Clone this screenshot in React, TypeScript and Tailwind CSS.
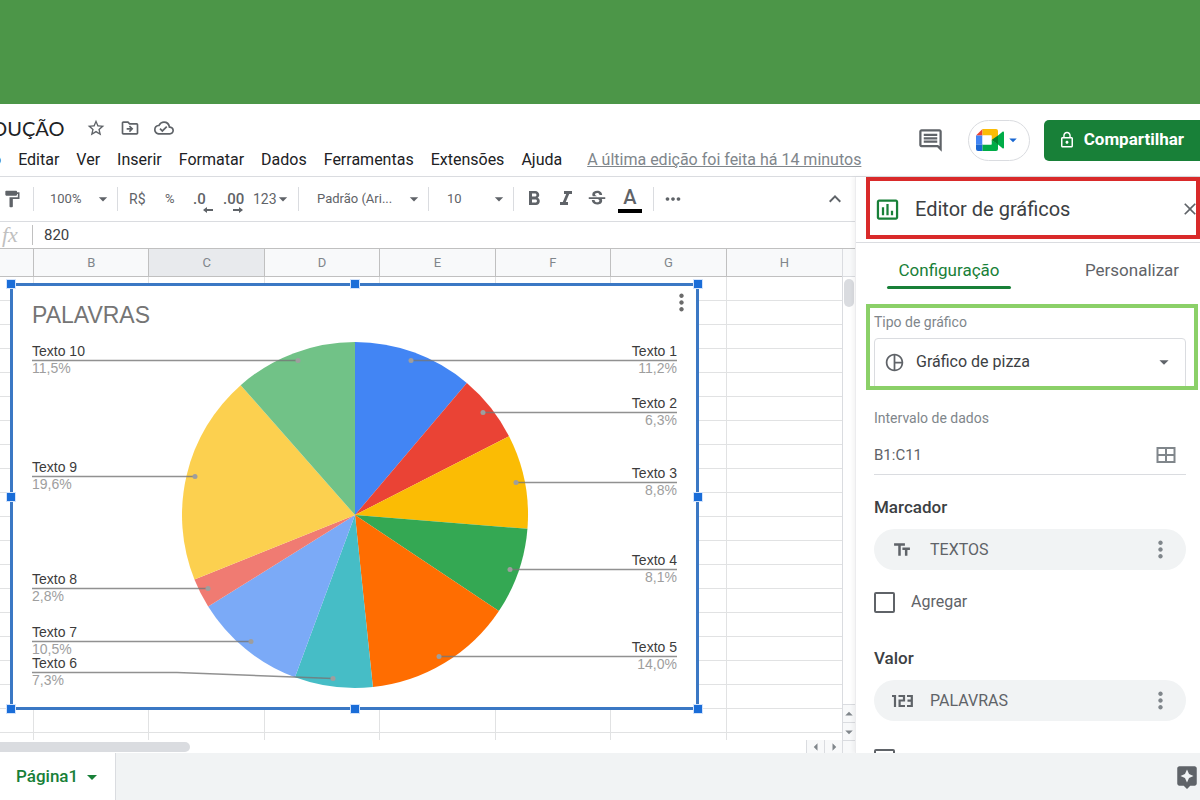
import React from 'react';
import type { ReactNode } from 'react';
import {
  MdArrowDropDown,
  MdAssistant,
  MdClose,
  MdExpandLess,
  MdFormatBold,
  MdFormatItalic,
  MdFormatPaint,
  MdInsertChartOutlined,
  MdLockOutline,
  MdMoreHoriz,
  MdMoreVert,
  MdOutlineCloudDone,
  MdOutlineComment,
  MdOutlineDriveFileMove,
  MdPieChartOutline,
  MdStarBorder,
  MdStrikethroughS,
  MdTextFields,
} from 'react-icons/md';

interface Slice {
  label: string;
  value: number;
  text: string;
  color: string;
  side: 'left' | 'right';
  lineY: number;
  dot: [number, number];
}

// Clockwise from twelve o'clock
const slices: Slice[] = [
  { label: 'Texto 1', value: 11.2, text: '11,2%', color: '#4285f4', side: 'right', lineY: 77, dot: [401, 77] },
  { label: 'Texto 2', value: 6.3, text: '6,3%', color: '#ea4335', side: 'right', lineY: 129, dot: [473, 129] },
  { label: 'Texto 3', value: 8.8, text: '8,8%', color: '#fbbc04', side: 'right', lineY: 199, dot: [506, 199] },
  { label: 'Texto 4', value: 8.1, text: '8,1%', color: '#34a853', side: 'right', lineY: 286, dot: [500, 286] },
  { label: 'Texto 5', value: 14.0, text: '14,0%', color: '#ff6d01', side: 'right', lineY: 373, dot: [429, 373] },
  { label: 'Texto 6', value: 7.3, text: '7,3%', color: '#46bdc6', side: 'left', lineY: 389, dot: [323, 395] },
  { label: 'Texto 7', value: 10.5, text: '10,5%', color: '#7baaf7', side: 'left', lineY: 358, dot: [241, 358] },
  { label: 'Texto 8', value: 2.8, text: '2,8%', color: '#f07b72', side: 'left', lineY: 305, dot: [198, 305] },
  { label: 'Texto 9', value: 19.6, text: '19,6%', color: '#fcd04f', side: 'left', lineY: 193, dot: [185, 193] },
  { label: 'Texto 10', value: 11.5, text: '11,5%', color: '#71c287', side: 'left', lineY: 77, dot: [288, 77] },
];

const CX = 345;
const CY = 232;
const R = 173;
const total = slices.reduce((sum, s) => sum + s.value, 0);

const point = (fraction: number) => {
  const angle = fraction * 2 * Math.PI;
  return `${CX + R * Math.sin(angle)} ${CY - R * Math.cos(angle)}`;
};

const slicePath = (index: number) => {
  const start = slices.slice(0, index).reduce((sum, s) => sum + s.value, 0) / total;
  const end = start + slices[index].value / total;
  return `M${CX} ${CY}L${point(start)}A${R} ${R} 0 0 1 ${point(end)}Z`;
};

const PieChart = () => (
  <svg viewBox="0 0 689 427" className="block h-full w-full font-['Liberation_Sans',sans-serif]">
    <text x="22" y="40" fontSize="23" fill="#757575">PALAVRAS</text>
    {slices.map((s, i) => (
      <path key={s.label} d={slicePath(i)} fill={s.color} />
    ))}
    {slices.map((s) => {
      const left = s.side === 'left';
      const edge = left ? 22 : 667;
      const anchor = left ? 'start' : 'end';
      const bend = left ? 167 : 530;
      return (
        <g key={s.label}>
          <polyline
            points={`${edge},${s.lineY + 0.5} ${s.dot[1] === s.lineY ? edge : bend},${s.lineY + 0.5} ${s.dot[0]},${s.dot[1] + 0.5}`}
            fill="none"
            stroke="#757575"
            strokeOpacity="0.8"
            strokeWidth="1.5"
          />
          <circle cx={s.dot[0]} cy={s.dot[1] + 0.5} r="2.5" fill="#9e9e9e" />
          <text x={edge} y={s.lineY - 4} fontSize="14" textAnchor={anchor} fill="#3c3c3c">{s.label}</text>
          <text x={edge} y={s.lineY + 13} fontSize="14" textAnchor={anchor} fill="#9e9e9e">{s.text}</text>
        </g>
      );
    })}
  </svg>
);

const handles = [
  '-left-1.5 -top-1.5',
  'left-1/2 -top-1.5 -translate-x-1/2',
  '-right-1.5 -top-1.5',
  '-left-1.5 top-1/2 -translate-y-1/2',
  '-right-1.5 top-1/2 -translate-y-1/2',
  '-left-1.5 -bottom-1.5',
  'left-1/2 -bottom-1.5 -translate-x-1/2',
  '-right-1.5 -bottom-1.5',
];

const MeetLogo = () => (
  <svg viewBox="0 0 28 22" className="h-[22px] w-[28px]">
    <path d="M0 6.500 6.500 0v6.500z" fill="#ea4335" />
    <path d="M0 6.500h6.500v9H0z" fill="#4285f4" />
    <path d="M0 15.500h6.500V22H2a2 2 0 0 1-2-2z" fill="#1967d2" />
    <path d="M6.500 0H20a2 2 0 0 1 2 2v6l-6.500 4V6.500h-9z" fill="#fbbc04" />
    <path d="M6.500 15.500h9V11l6.500 4v5a2 2 0 0 1-2 2H6.500z" fill="#00ac47" />
    <path d="M22 6.500v9L15.500 11z" fill="#00832d" />
    <path d="M22 6.500 26.800 2.600c.5-.4 1.200 0 1.200.6v15.600c0 .6-.7 1-1.200.6L22 15.500z" fill="#00ac47" />
    <path d="M6.500 6.500h9v9h-9z" fill="#fff" />
  </svg>
);

const NumberIcon = () => (
  <svg viewBox="0 0 21 13" className="h-[13px] w-[21px]" fill="none" stroke="currentColor" strokeWidth="2.2">
    <path d="M0 2h3v11M6.500 2H12v4.500H7.600V12H13M15 2h4.800v10H15M15.500 6.700h4" />
  </svg>
);

const menus = ['o', 'Editar', 'Ver', 'Inserir', 'Formatar', 'Dados', 'Ferramentas', 'Extensões', 'Ajuda'];

const Header = () => (
  <header className="flex h-[73px] shrink-0 items-center justify-between border-b border-[#dadce0] bg-white">
    <div className="flex flex-col gap-1 pt-2">
      <div className="-ml-2 flex h-7 items-center gap-3.5 text-[#5f6368]">
        <h1 className="mr-2 font-['Lato',sans-serif] text-[20px] leading-7 text-[#202124]">DUÇÃO</h1>
        <button aria-label="Marcar com estrela"><MdStarBorder size={20} /></button>
        <button aria-label="Mover"><MdOutlineDriveFileMove size={20} /></button>
        <button aria-label="Status do documento"><MdOutlineCloudDone size={20} /></button>
      </div>
      <nav className="-ml-2 flex h-7 items-center gap-[17px] whitespace-nowrap text-[16px] text-[#202124]">
        {menus.map((m) => (
          <button key={m}>{m}</button>
        ))}
        <a href="#historico" className="ml-2 text-[#80868b] underline">
          A última edição foi feita há 14 minutos
        </a>
      </nav>
    </div>
    <div className="flex items-center">
      <button aria-label="Comentários" className="mr-6 text-[#5f6368]"><MdOutlineComment size={27} /></button>
      <button aria-label="Meet" className="mr-3.5 flex h-[41px] w-[62px] items-center justify-center rounded-full border border-[#dadce0]">
        <MeetLogo />
        <MdArrowDropDown size={18} className="text-[#1967d2]" />
      </button>
      <button className="flex h-[41px] items-center gap-2 rounded-l-[5px] bg-[#188038] pl-3.5 pr-4 text-[17px] font-bold text-white">
        <MdLockOutline size={18} />
        Compartilhar
      </button>
    </div>
  </header>
);

interface PickerProps {
  label: string;
  value: string;
  className: string;
}

const Picker = ({ label, value, className }: PickerProps) => (
  <div className={`relative flex h-6 items-center border-l border-[#dadce0] ${className}`}>
    <select aria-label={label} className="w-full appearance-none bg-transparent outline-none">
      <option>{value}</option>
    </select>
    <MdArrowDropDown size={20} className="pointer-events-none absolute right-1" />
  </div>
);

const DecimalButton = ({ label, children, flip }: { label: string; children: ReactNode; flip?: boolean }) => (
  <button aria-label={label} className="flex w-[30px] flex-col items-start pt-1.5 text-[15px] font-medium leading-4">
    <span>{children}</span>
    <svg viewBox="0 0 10 6" className={`ml-2.5 h-1.5 w-2.5 ${flip ? 'rotate-180' : ''}`}>
      <path d="M4 0v2h6v2H4v2L0 3z" fill="currentColor" />
    </svg>
  </button>
);

const Toolbar = () => (
  <div className="flex h-[45px] shrink-0 items-center whitespace-nowrap border-b border-[#dadce0] text-[13px] text-[#5f6368]">
    <button aria-label="Pintar formatação" className="w-[33px] shrink-0 pl-0.5"><MdFormatPaint size={20} /></button>
    <Picker label="Zoom" value="100%" className="w-[84px] pl-4" />
    <div className="flex h-6 w-[181px] items-center border-l border-[#dadce0] pl-[11px]">
      <button className="w-9 text-left text-[14px]">R$</button>
      <button className="w-7 text-left">%</button>
      <DecimalButton label="Diminuir casas decimais">.0</DecimalButton>
      <DecimalButton label="Aumentar casas decimais" flip>.00</DecimalButton>
      <button className="flex items-center text-[14px]">
        123
        <MdArrowDropDown size={20} className="-ml-1" />
      </button>
    </div>
    <Picker label="Fonte" value="Padrão (Ari..." className="w-[130px] pl-[18px]" />
    <Picker label="Tamanho da fonte" value="10" className="w-[85px] pl-[18px]" />
    <div className="flex h-6 w-[140px] items-center border-l border-[#dadce0] pl-2">
      <button aria-label="Negrito" className="w-8"><MdFormatBold size={24} /></button>
      <button aria-label="Itálico" className="w-8"><MdFormatItalic size={24} /></button>
      <button aria-label="Tachado" className="w-8"><MdStrikethroughS size={22} /></button>
      <button aria-label="Cor do texto" className="w-6 border-b-4 border-black text-[20px] font-medium leading-6">A</button>
    </div>
    <div className="flex h-6 flex-1 items-center justify-between border-l border-[#dadce0] pl-2 pr-2">
      <button aria-label="Mais"><MdMoreHoriz size={22} /></button>
      <button aria-label="Ocultar menus"><MdExpandLess size={24} /></button>
    </div>
  </div>
);

const columns = ['B', 'C', 'D', 'E', 'F', 'G', 'H'];
const rows = Array.from({ length: 60 }, (_, i) => i + 1);

const Spreadsheet = () => (
  <div className="flex min-h-0 flex-1">
    <div className="flex min-w-0 flex-1 flex-col">
      <div className="relative min-h-0 flex-1 overflow-hidden">
        <table className="w-full table-fixed border-separate border-spacing-0 text-[13px] text-[#80868b]">
          <thead>
            <tr className="h-7 bg-[#f8f9fa]">
              <th className="w-[34px] border-b border-r border-[#c0c0c0] p-0" />
              {columns.map((c) => (
                <th
                  key={c}
                  className={`border-b border-[#c0c0c0] p-0 font-normal ${c === 'H' ? '' : 'border-r'} ${c === 'C' ? 'bg-[#e8eaed]' : ''}`}
                >
                  {c}
                </th>
              ))}
            </tr>
          </thead>
          <tbody>
            {rows.map((r) => (
              <tr key={r} className="h-6">
                <td className="border-b border-r border-[#e1e2e3] p-0" />
                {columns.map((c) => (
                  <td key={c} className={`border-b border-[#e1e2e3] p-0 ${c === 'H' ? '' : 'border-r'}`} />
                ))}
              </tr>
            ))}
          </tbody>
        </table>
        {/* Floating chart, selected */}
        <div className="absolute left-[10px] top-[34px] h-[427px] w-[689px] bg-white">
          <PieChart />
          <div className="absolute inset-0 border-[3px] border-[#3b78c4]">
            {handles.map((h) => (
              <span key={h} className={`absolute size-2 bg-[#1a6dd8] outline outline-[#d2e3fc] ${h}`} />
            ))}
          </div>
          <button aria-label="Opções do gráfico" className="absolute right-1 top-1.5 text-[#6b6b6b]">
            <MdMoreVert size={27} />
          </button>
        </div>
      </div>
      <div className="flex h-[13px] shrink-0 items-center justify-between bg-white">
        <div className="h-2.5 w-[190px] rounded-r-full bg-[#dadce0]" />
        <div className="flex h-full text-[#80868b]">
          <button aria-label="Rolar para a esquerda" className="flex w-[18px] items-center justify-center border-l border-[#dadce0] bg-[#f8f9fa]">
            <MdArrowDropDown size={18} className="shrink-0 rotate-90" />
          </button>
          <button aria-label="Rolar para a direita" className="flex w-[18px] items-center justify-center border-l border-[#dadce0] bg-[#f8f9fa]">
            <MdArrowDropDown size={18} className="shrink-0 -rotate-90" />
          </button>
        </div>
      </div>
    </div>
    <div className="flex w-[13px] shrink-0 flex-col items-center justify-between border-l border-[#dadce0] bg-white text-[#80868b]">
      <div className="flex w-full flex-col items-center gap-0.5">
        <div className="h-7 w-full border-b border-[#dadce0] bg-[#f8f9fa]" />
        <div className="h-7 w-2.5 rounded-full bg-[#dadce0]" />
      </div>
      <div className="w-full bg-[#f8f9fa]">
        <button aria-label="Rolar para cima" className="flex h-[18px] w-full items-center justify-center border-t border-[#dadce0]">
          <MdArrowDropDown size={18} className="shrink-0 rotate-180" />
        </button>
        <button aria-label="Rolar para baixo" className="flex h-[18px] w-full items-center justify-center border-t border-[#dadce0]">
          <MdArrowDropDown size={18} className="shrink-0" />
        </button>
        <div className="h-[13px] border-t border-[#dadce0]" />
      </div>
    </div>
  </div>
);

const FieldPill = ({ icon, name }: { icon: ReactNode; name: string }) => (
  <div className="flex h-[41px] items-center rounded-full bg-[#f1f3f4] pr-3 text-[#5f6368]">
    <span className="flex w-14 justify-center">{icon}</span>
    <span className="flex-1 text-[16px]">{name}</span>
    <button aria-label={`Opções de ${name}`} className="text-[#80868b]"><MdMoreVert size={27} /></button>
  </div>
);

const CheckRow = ({ label }: { label: string }) => (
  <label className="flex items-center gap-4 text-[16px] text-[#5f6368]">
    <input type="checkbox" className="size-[21px] appearance-none rounded-[2px] border-2 border-[#5f6368]" />
    {label}
  </label>
);

const ChartEditor = () => (
  <aside className="flex w-[345px] shrink-0 flex-col overflow-hidden border-l border-[#ececee] bg-white shadow-[-2px_0_4px_#0000000d]">
    <div className="h-[66px] shrink-0 border-b border-[#dadce0] pl-2.5">
      <div className="flex h-[62px] items-center border-4 border-[#d92a2a] pt-0.5">
        <MdInsertChartOutlined size={27} className="ml-1 text-[#188038]" />
        <h2 className="ml-3.5 flex-1 text-[20px] text-[#3c4043]">Editor de gráficos</h2>
        <button aria-label="Fechar" className="-mr-1 text-[#5f6368]"><MdClose size={20} /></button>
      </div>
    </div>
    <div role="tablist" className="flex h-[61px] shrink-0 justify-between pl-[31px] pr-1.5 text-[17px]">
      <button role="tab" aria-selected="true" className="flex h-[46px] w-[124px] flex-col items-center justify-between pt-[15px] leading-6 text-[#188038]">
        Configuração
        <span className="h-[3px] w-full shrink-0 rounded-full bg-[#188038]" />
      </button>
      <button role="tab" aria-selected="false" className="flex h-[46px] w-[124px] flex-col items-center pt-[15px] leading-6 text-[#5f6368]">
        Personalizar
      </button>
    </div>
    <div className="ml-2.5 mr-0.5 h-[86px] shrink-0 overflow-hidden border-4 border-[#8bd068] px-1 pt-1">
      <label htmlFor="tipo" className="block text-[14px] leading-5 text-[#80868b]">Tipo de gráfico</label>
      <div className="relative mr-1 mt-1.5 flex h-[54px] items-center rounded-[4px] border border-[#dadce0] pb-1.5 pl-[9px] text-[#5f6368]">
        <MdPieChartOutline size={21} />
        <select id="tipo" className="ml-[11px] flex-1 appearance-none bg-transparent text-[16px] text-[#3c4043] outline-none">
          <option>Gráfico de pizza</option>
        </select>
        <MdArrowDropDown size={22} className="pointer-events-none absolute right-2.5" />
      </div>
    </div>
    <div className="flex shrink-0 flex-col pl-[18px] pr-3.5 pt-[18px]">
      <label htmlFor="intervalo" className="text-[14px] leading-5 text-[#80868b]">Intervalo de dados</label>
      <div className="mt-2 flex h-[39px] items-center border-b border-[#dadce0] pr-2.5">
        <input id="intervalo" defaultValue="B1:C11" className="min-w-0 flex-1 bg-transparent text-[15px] text-[#5f6368] outline-none" />
        <button aria-label="Selecionar intervalo de dados">
          <svg viewBox="0 0 20 18" className="h-[18px] w-5" fill="none" stroke="#80868b" strokeWidth="2">
            <rect x="1.500" y="2" width="17" height="14" />
            <path d="M10 2v14M1.500 9h17" />
          </svg>
        </button>
      </div>
      <h3 className="mt-5 text-[17px] font-medium leading-6 text-[#3c4043]">Marcador</h3>
      <div className="mt-2.5"><FieldPill icon={<MdTextFields size={20} />} name="TEXTOS" /></div>
      <div className="mt-5"><CheckRow label="Agregar" /></div>
      <h3 className="mt-8 text-[17px] font-medium leading-6 text-[#3c4043]">Valor</h3>
      <div className="mt-2.5"><FieldPill icon={<NumberIcon />} name="PALAVRAS" /></div>
      <div className="mt-7"><CheckRow label="" /></div>
    </div>
  </aside>
);

const App = () => (
  <div className="flex h-screen flex-col overflow-hidden bg-white font-['Roboto',sans-serif]">
    <div className="h-[104px] shrink-0 bg-[#4c9648]" />
    <Header />
    <main className="flex min-h-0 flex-1">
      <section className="flex min-w-0 flex-1 flex-col">
        <Toolbar />
        <div className="flex h-[27px] shrink-0 items-center border-b border-[#c0c0c0]">
          <label htmlFor="formula" className="w-8 pl-0.5 font-['Liberation_Serif',serif] text-[22px] italic leading-6 text-[#c0c0c0]">fx</label>
          <input
            id="formula"
            defaultValue="820"
            className="h-5 min-w-0 flex-1 border-l border-[#c0c0c0] bg-transparent pl-[11px] text-[15px] text-[#3c4043] outline-none"
          />
        </div>
        <Spreadsheet />
      </section>
      <ChartEditor />
    </main>
    <footer className="flex h-[47px] shrink-0 items-center justify-between bg-[#f1f3f4]">
      <button className="flex h-full w-[116px] items-center gap-0.5 border-r border-[#dadce0] bg-white pl-4 text-[17px] font-medium text-[#188038]">
        Página1
        <MdArrowDropDown size={24} />
      </button>
      <button aria-label="Explorar" className="text-[#5f6368]"><MdAssistant size={26} /></button>
    </footer>
  </div>
);

export default App;
